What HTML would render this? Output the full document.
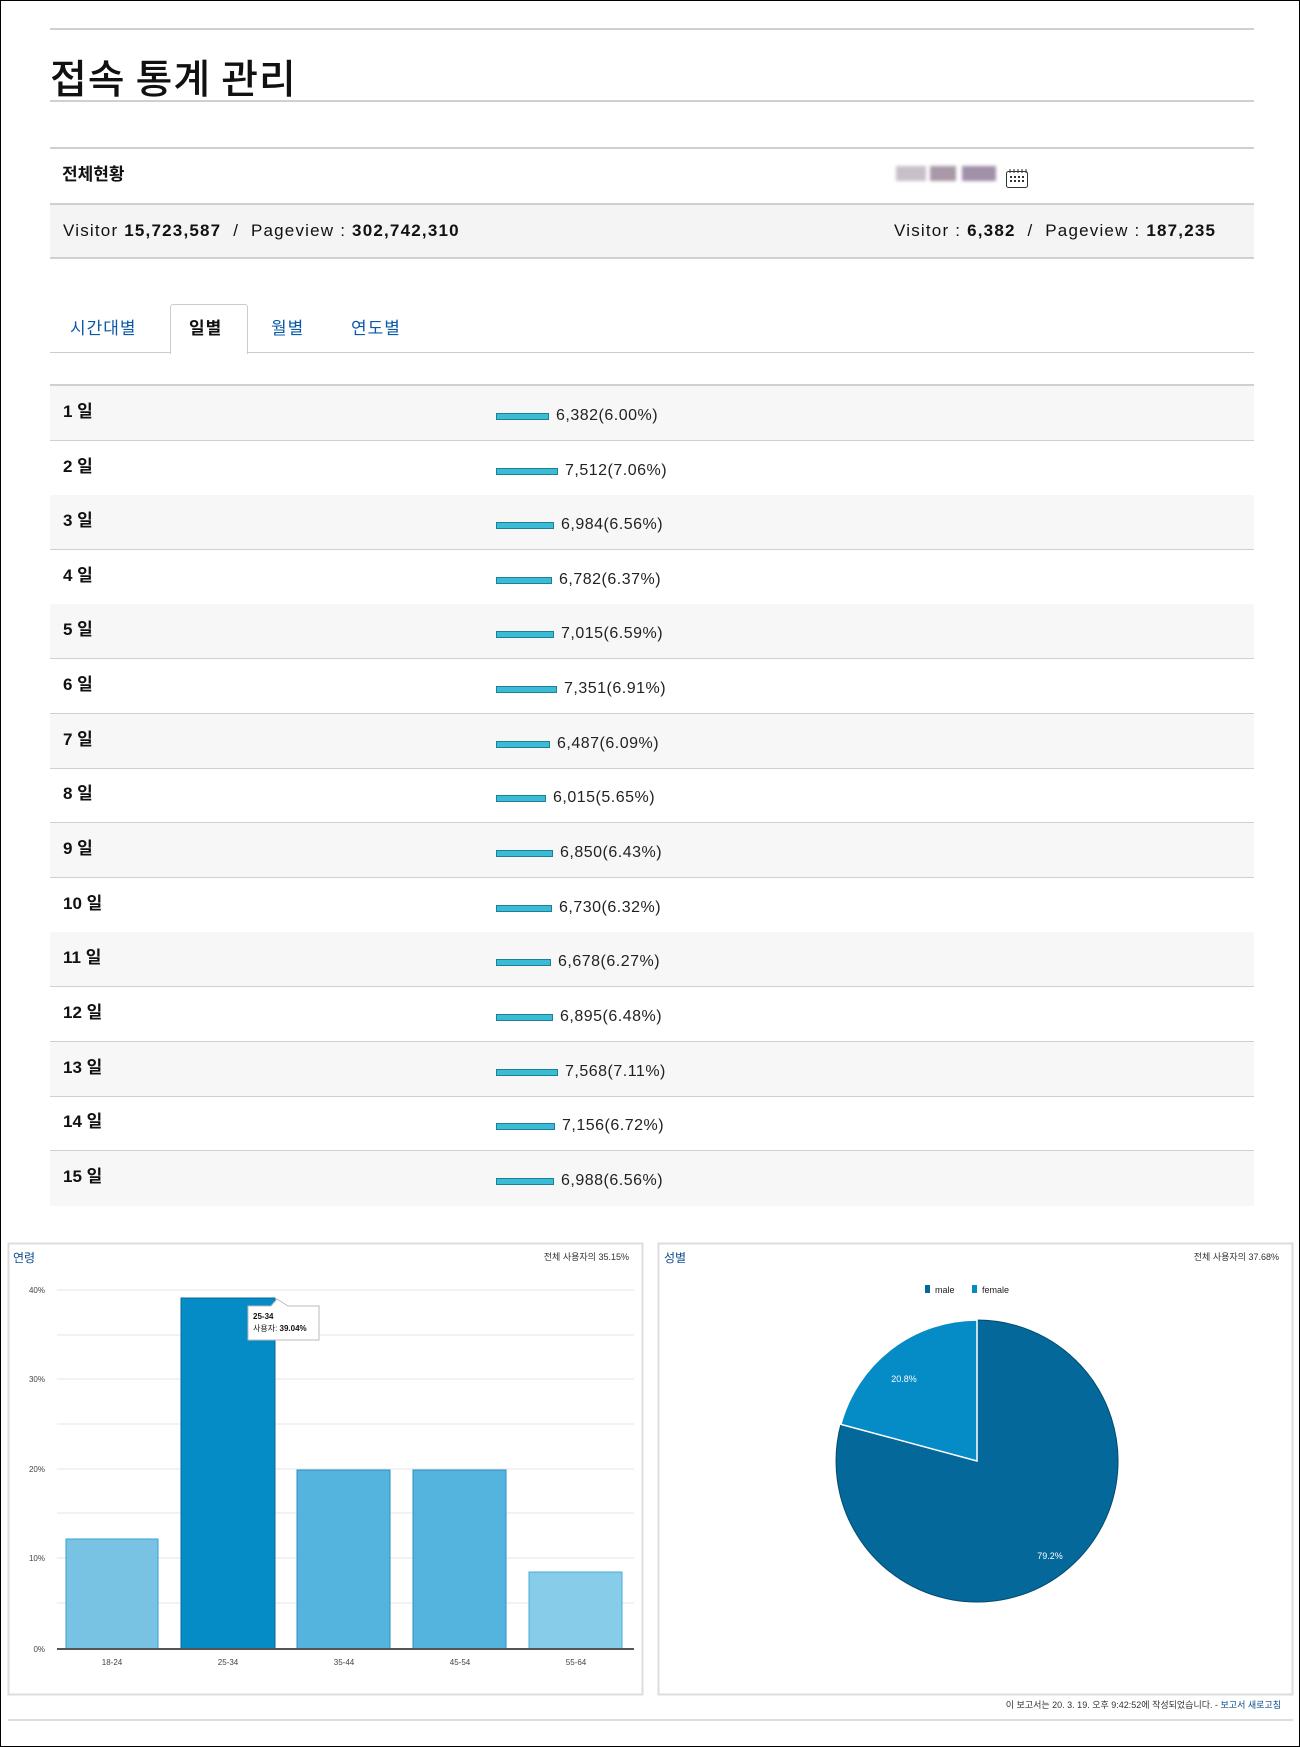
<!DOCTYPE html>
<html><head><meta charset="utf-8"><style>
*{margin:0;padding:0;box-sizing:border-box}
body{width:1300px;height:1747px;position:relative;background:#fff;font-family:"Liberation Sans","Noto Sans CJK KR",sans-serif;color:#111;overflow:hidden;border:1px solid #000}
.a{position:absolute}
.hl{position:absolute;left:49px;width:1204px;height:2px;background:#d0d0d0}
.row{position:absolute;left:49px;width:1204px;height:55px;border-bottom:1px solid #cfcfcf}
.row.g{background:#f7f7f7}
.row .l{position:absolute;left:13px;top:16px;font-size:17px;font-weight:bold;line-height:20px}
.row .b{position:absolute;left:446px;top:27px;height:7px;background:#3bbcd6;border:1px solid #1f7f95}
.row .t{position:absolute;top:20px;font-size:16px;color:#222;line-height:20px;letter-spacing:0.5px}
.tab{position:absolute;top:313px;font-size:17px;color:#0b5aa8;letter-spacing:1px}
.sum{font-size:17px;letter-spacing:1.2px}
</style></head><body>
<div class="hl" style="top:27px"></div>
<div class="a" style="left:49px;top:46px;font-size:40px;color:#111;font-weight:500;font-family:'Noto Sans CJK KR',sans-serif;letter-spacing:1px">접속 통계 관리</div>
<div class="hl" style="top:99px"></div>
<div class="hl" style="top:146px"></div>
<div class="a" style="left:61px;top:164px;font-size:17px;font-weight:bold;line-height:20px">전체현황</div>
<div class="a" style="left:895px;top:165px;width:100px;height:15px;background:linear-gradient(90deg,#c8c0c8 0 30%,#fff 30% 34%,#a898a8 34% 60%,#fff 60% 66%,#a090a8 66% 100%);filter:blur(1.5px)"></div>
<svg class="a" style="left:1004px;top:167px" width="24" height="21" viewBox="0 0 24 21"><rect x="1.5" y="3.5" width="21" height="16" rx="2" fill="#fff" stroke="#333"/><path d="M5 1v4M9 1v4M13 1v4M17 1v4M21 1v4" stroke="#333"/><g fill="#333"><rect x="5" y="8" width="2" height="2"/><rect x="9" y="8" width="2" height="2"/><rect x="13" y="8" width="2" height="2"/><rect x="17" y="8" width="2" height="2"/><rect x="5" y="12" width="2" height="2"/><rect x="9" y="12" width="2" height="2"/><rect x="13" y="12" width="2" height="2"/><rect x="17" y="12" width="2" height="2"/></g></svg>
<div class="hl" style="top:202px"></div>
<div class="a" style="left:49px;top:204px;width:1204px;height:53px;background:#f4f4f4"></div>
<div class="a sum" style="left:62px;top:220px">Visitor <b>15,723,587</b> &nbsp;/ &nbsp;Pageview : <b>302,742,310</b></div>
<div class="a sum" style="left:893px;top:220px">Visitor : <b>6,382</b> &nbsp;/ &nbsp;Pageview : <b>187,235</b></div>
<div class="hl" style="top:256px"></div>
<div class="a" style="left:169px;top:303px;width:78px;height:50px;border:1px solid #ccc;border-bottom:none;border-radius:3px 3px 0 0;background:#fff;z-index:2"></div>
<div class="a" style="left:49px;top:351px;width:1204px;height:1px;background:#ccc"></div>
<div class="tab" style="left:69px">시간대별</div>
<div class="tab" style="left:188px;color:#111;z-index:3;font-weight:bold">일별</div>
<div class="tab" style="left:270px">월별</div>
<div class="tab" style="left:350px">연도별</div>
<div class="hl" style="top:383px"></div>

<div class="row g" style="top:385px"><div class="l">1 일</div><div class="b" style="width:53px"></div><div class="t" style="left:506px">6,382(6.00%)</div></div>
<div class="row" style="top:440px"><div class="l">2 일</div><div class="b" style="width:62px"></div><div class="t" style="left:515px">7,512(7.06%)</div></div>
<div class="row g" style="top:494px"><div class="l">3 일</div><div class="b" style="width:58px"></div><div class="t" style="left:511px">6,984(6.56%)</div></div>
<div class="row" style="top:549px"><div class="l">4 일</div><div class="b" style="width:56px"></div><div class="t" style="left:509px">6,782(6.37%)</div></div>
<div class="row g" style="top:603px"><div class="l">5 일</div><div class="b" style="width:58px"></div><div class="t" style="left:511px">7,015(6.59%)</div></div>
<div class="row" style="top:658px"><div class="l">6 일</div><div class="b" style="width:61px"></div><div class="t" style="left:514px">7,351(6.91%)</div></div>
<div class="row g" style="top:713px"><div class="l">7 일</div><div class="b" style="width:54px"></div><div class="t" style="left:507px">6,487(6.09%)</div></div>
<div class="row" style="top:767px"><div class="l">8 일</div><div class="b" style="width:50px"></div><div class="t" style="left:503px">6,015(5.65%)</div></div>
<div class="row g" style="top:822px"><div class="l">9 일</div><div class="b" style="width:57px"></div><div class="t" style="left:510px">6,850(6.43%)</div></div>
<div class="row" style="top:877px"><div class="l">10 일</div><div class="b" style="width:56px"></div><div class="t" style="left:509px">6,730(6.32%)</div></div>
<div class="row g" style="top:931px"><div class="l">11 일</div><div class="b" style="width:55px"></div><div class="t" style="left:508px">6,678(6.27%)</div></div>
<div class="row" style="top:986px"><div class="l">12 일</div><div class="b" style="width:57px"></div><div class="t" style="left:510px">6,895(6.48%)</div></div>
<div class="row g" style="top:1041px"><div class="l">13 일</div><div class="b" style="width:62px"></div><div class="t" style="left:515px">7,568(7.11%)</div></div>
<div class="row" style="top:1095px"><div class="l">14 일</div><div class="b" style="width:59px"></div><div class="t" style="left:512px">7,156(6.72%)</div></div>
<div class="row g" style="top:1150px;border-bottom:none"><div class="l">15 일</div><div class="b" style="width:58px"></div><div class="t" style="left:511px">6,988(6.56%)</div></div>

<svg class="a" style="left:0;top:1235px" width="1300" height="500" viewBox="0 1235 1300 500" font-family="Liberation Sans,Noto Sans CJK KR,sans-serif">
<rect x="7.5" y="1242.5" width="634" height="451" fill="#fff" stroke="#ddd" stroke-width="2"/>
<rect x="657.5" y="1242.5" width="634" height="451" fill="#fff" stroke="#ddd" stroke-width="2"/>
<text x="12" y="1261" font-size="12" fill="#0b4d8c">연령</text>
<text x="628" y="1259" font-size="9" fill="#333" text-anchor="end">전체 사용자의 35.15%</text>
<g stroke="#e6e6e6"><line x1="56" y1="1289" x2="633" y2="1289"/><line x1="56" y1="1334" x2="633" y2="1334"/><line x1="56" y1="1378" x2="633" y2="1378"/><line x1="56" y1="1423" x2="633" y2="1423"/><line x1="56" y1="1468" x2="633" y2="1468"/><line x1="56" y1="1512" x2="633" y2="1512"/><line x1="56" y1="1557" x2="633" y2="1557"/><line x1="56" y1="1602" x2="633" y2="1602"/></g>
<g font-size="8" fill="#444" text-anchor="end"><text x="44" y="1292">40%</text><text x="44" y="1381">30%</text><text x="44" y="1471">20%</text><text x="44" y="1560">10%</text><text x="44" y="1651">0%</text></g>
<rect x="65" y="1538" width="92" height="110" fill="#78c3e3" stroke="#3a9fd0"/>
<rect x="180" y="1297" width="94" height="351" fill="#058bc5" stroke="#0a6a9a"/>
<rect x="296" y="1469" width="93" height="179" fill="#55b4de" stroke="#2a90c4"/>
<rect x="412" y="1469" width="93" height="179" fill="#55b4de" stroke="#2a90c4"/>
<rect x="528" y="1571" width="93" height="77" fill="#87cde9" stroke="#4aabd7"/>
<line x1="56" y1="1648" x2="633" y2="1648" stroke="#555" stroke-width="2"/>
<g font-size="8" fill="#444" text-anchor="middle"><text x="111" y="1664">18-24</text><text x="227" y="1664">25-34</text><text x="343" y="1664">35-44</text><text x="459" y="1664">45-54</text><text x="575" y="1664">55-64</text></g>
<path d="M247 1305H270L276 1298L287 1305H318V1339H247Z" fill="#fff" stroke="#bbb"/>
<text x="252" y="1318" font-size="8" font-weight="bold" fill="#111">25-34</text>
<text x="252" y="1330" font-size="8" fill="#111">사용자: <tspan font-weight="bold">39.04%</tspan></text>
<text x="663" y="1261" font-size="12" fill="#0b4d8c">성별</text>
<text x="1278" y="1259" font-size="9" fill="#333" text-anchor="end">전체 사용자의 37.68%</text>
<rect x="924" y="1284" width="5" height="8" fill="#05689a"/><text x="934" y="1292" font-size="9" fill="#222">male</text>
<rect x="971" y="1284" width="5" height="8" fill="#058bc5"/><text x="981" y="1292" font-size="9" fill="#222">female</text>
<path d="M976 1460V1319A141 141 0 1 1 839.9 1423.3Z" fill="#05689a" stroke="#034a70"/>
<path d="M976 1460L839.9 1423.3A141 141 0 0 1 976 1319Z" fill="#058bc5" stroke="#fff" stroke-width="1.5"/>
<text x="903" y="1381" font-size="9" fill="#fff" text-anchor="middle">20.8%</text>
<text x="1049" y="1558" font-size="9" fill="#fff" text-anchor="middle">79.2%</text>
<text x="1280" y="1707" font-size="9" fill="#333" text-anchor="end">이 보고서는 20. 3. 19. 오후 9:42:52에 작성되었습니다. - <tspan fill="#0b4d8c">보고서 새로고침</tspan></text>
<line x1="7" y1="1719" x2="1292" y2="1719" stroke="#ddd" stroke-width="2"/>
</svg>
</body></html>
